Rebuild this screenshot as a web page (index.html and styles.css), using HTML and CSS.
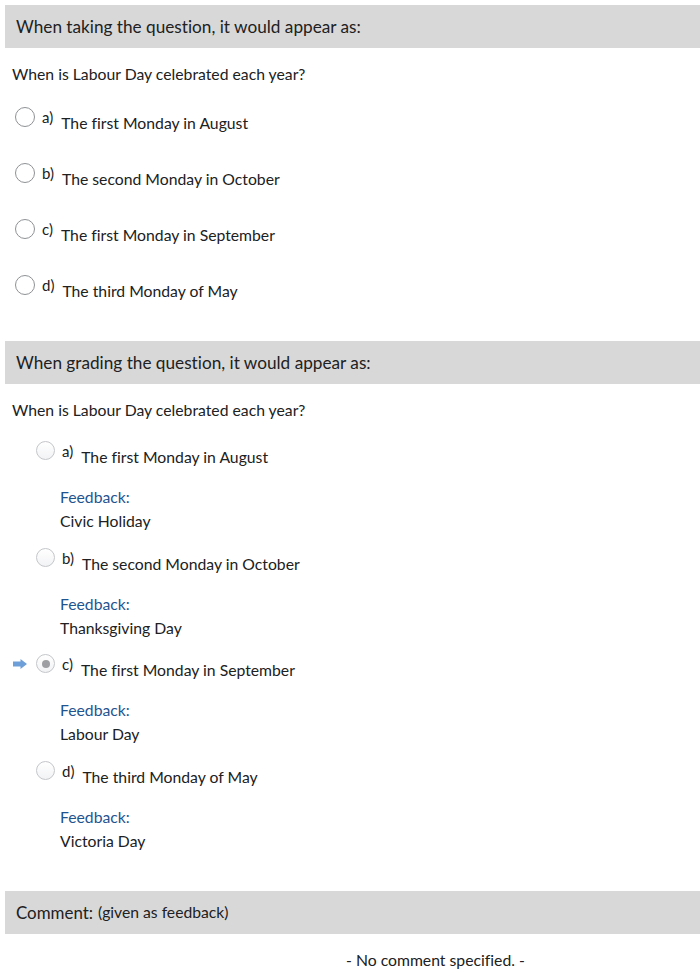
FILE: index.html
```html
<!DOCTYPE html>
<html>
<head>
<meta charset="utf-8">
<link rel="stylesheet" href="styles.css">
</head>
<body>
<div class="page">
  <div class="bar"><span class="bar-title">When taking the question, it would appear as:</span></div>
  <div class="question">When is Labour Day celebrated each year?</div>
  <div class="options">
    <div class="opt"><span class="radio"></span><span class="letter">a)</span><span class="text">The first Monday in August</span></div>
    <div class="opt"><span class="radio"></span><span class="letter">b)</span><span class="text">The second Monday in October</span></div>
    <div class="opt"><span class="radio"></span><span class="letter">c)</span><span class="text">The first Monday in September</span></div>
    <div class="opt"><span class="radio"></span><span class="letter">d)</span><span class="text">The third Monday of May</span></div>
  </div>

  <div class="bar"><span class="bar-title">When grading the question, it would appear as:</span></div>
  <div class="question">When is Labour Day celebrated each year?</div>
  <div class="graded">
    <div class="gopt">
      <div class="grow"><span class="arrow-slot"></span><span class="radio g"></span><span class="letter">a)</span><span class="text">The first Monday in August</span></div>
      <div class="fb"><div class="fb-label">Feedback:</div><div class="fb-text">Civic Holiday</div></div>
    </div>
    <div class="gopt">
      <div class="grow"><span class="arrow-slot"></span><span class="radio g"></span><span class="letter">b)</span><span class="text">The second Monday in October</span></div>
      <div class="fb"><div class="fb-label">Feedback:</div><div class="fb-text">Thanksgiving Day</div></div>
    </div>
    <div class="gopt">
      <div class="grow"><span class="arrow-slot"><svg width="14" height="10" viewBox="0 0 14 10"><path d="M0 2.6 H7.5 V0 L14 5 L7.5 10 V7.4 H0 Z" fill="#6f9fd8"/></svg></span><span class="radio g checked"></span><span class="letter">c)</span><span class="text">The first Monday in September</span></div>
      <div class="fb"><div class="fb-label">Feedback:</div><div class="fb-text">Labour Day</div></div>
    </div>
    <div class="gopt last">
      <div class="grow"><span class="arrow-slot"></span><span class="radio g"></span><span class="letter">d)</span><span class="text">The third Monday of May</span></div>
      <div class="fb"><div class="fb-label">Feedback:</div><div class="fb-text">Victoria Day</div></div>
    </div>
  </div>

  <div class="bar bar3"><span class="bar-title">Comment:</span><span class="bar-sub">(given as feedback)</span></div>
  <div class="nocomment">- No comment specified. -</div>
</div>
</body>
</html>
```
FILE: styles.css
```css
* { box-sizing: border-box; }
html, body { margin: 0; padding: 0; background: #fff; }
body {
  font-family: Lato, "Open Sans", "Liberation Sans", sans-serif;
  color: #202122;
  font-variant-ligatures: none;
}
.page { padding: 5px 0 0 5px; }
.bar {
  background: #d8d8d8;
  height: 43px;
  display: flex;
  align-items: center;
  padding-left: 11px;
}
.bar-title { font-size: 17.2px; }
.bar-sub { font-size: 15.7px; margin-left: 5px; }
.question {
  font-size: 15.75px;
  padding: 17px 0 0 7px;
  line-height: 18px;
}
.options {
  display: flex;
  flex-direction: column;
  gap: 36px;
  padding: 24px 0 0 10px;
  height: 258px;
}
.opt { display: flex; align-items: flex-start; height: 20px; }
.radio {
  width: 20px; height: 20px;
  border-radius: 50%;
  border: 1px solid #8f9194;
  background: #fff;
  flex: none;
  position: relative;
}
.radio.g { width: 19px; height: 19px; border-color: #c4c6c9; background: linear-gradient(#fff, #f2f3f5); }
.radio.checked::after {
  content: "";
  position: absolute;
  left: 4.5px; top: 4.5px;
  width: 8px; height: 8px;
  border-radius: 50%;
  background: #9d9fa2;
}
.letter { font-size: 15px; margin-left: 7px; line-height: 18px; margin-top: 1px; }
.text { font-size: 15.75px; margin-left: 8px; line-height: 18px; margin-top: 7px; }

.graded { padding: 22px 0 0 8px; }
.gopt { height: 106.5px; }
.gopt.last { height: 130px; }
.grow { display: flex; align-items: flex-start; height: 20px; }
.arrow-slot { width: 23px; height: 19px; flex: none; display: flex; align-items: center; }
.fb { padding: 24px 0 0 47px; font-size: 15.75px; line-height: 24px; }
.fb-label { color: #1f5491; }
.fb-text { color: #202122; }

.bar3 .bar-title { font-size: 16.9px; }
.nocomment {
  font-size: 15.75px;
  padding: 16px 0 0 341px;
}
```
